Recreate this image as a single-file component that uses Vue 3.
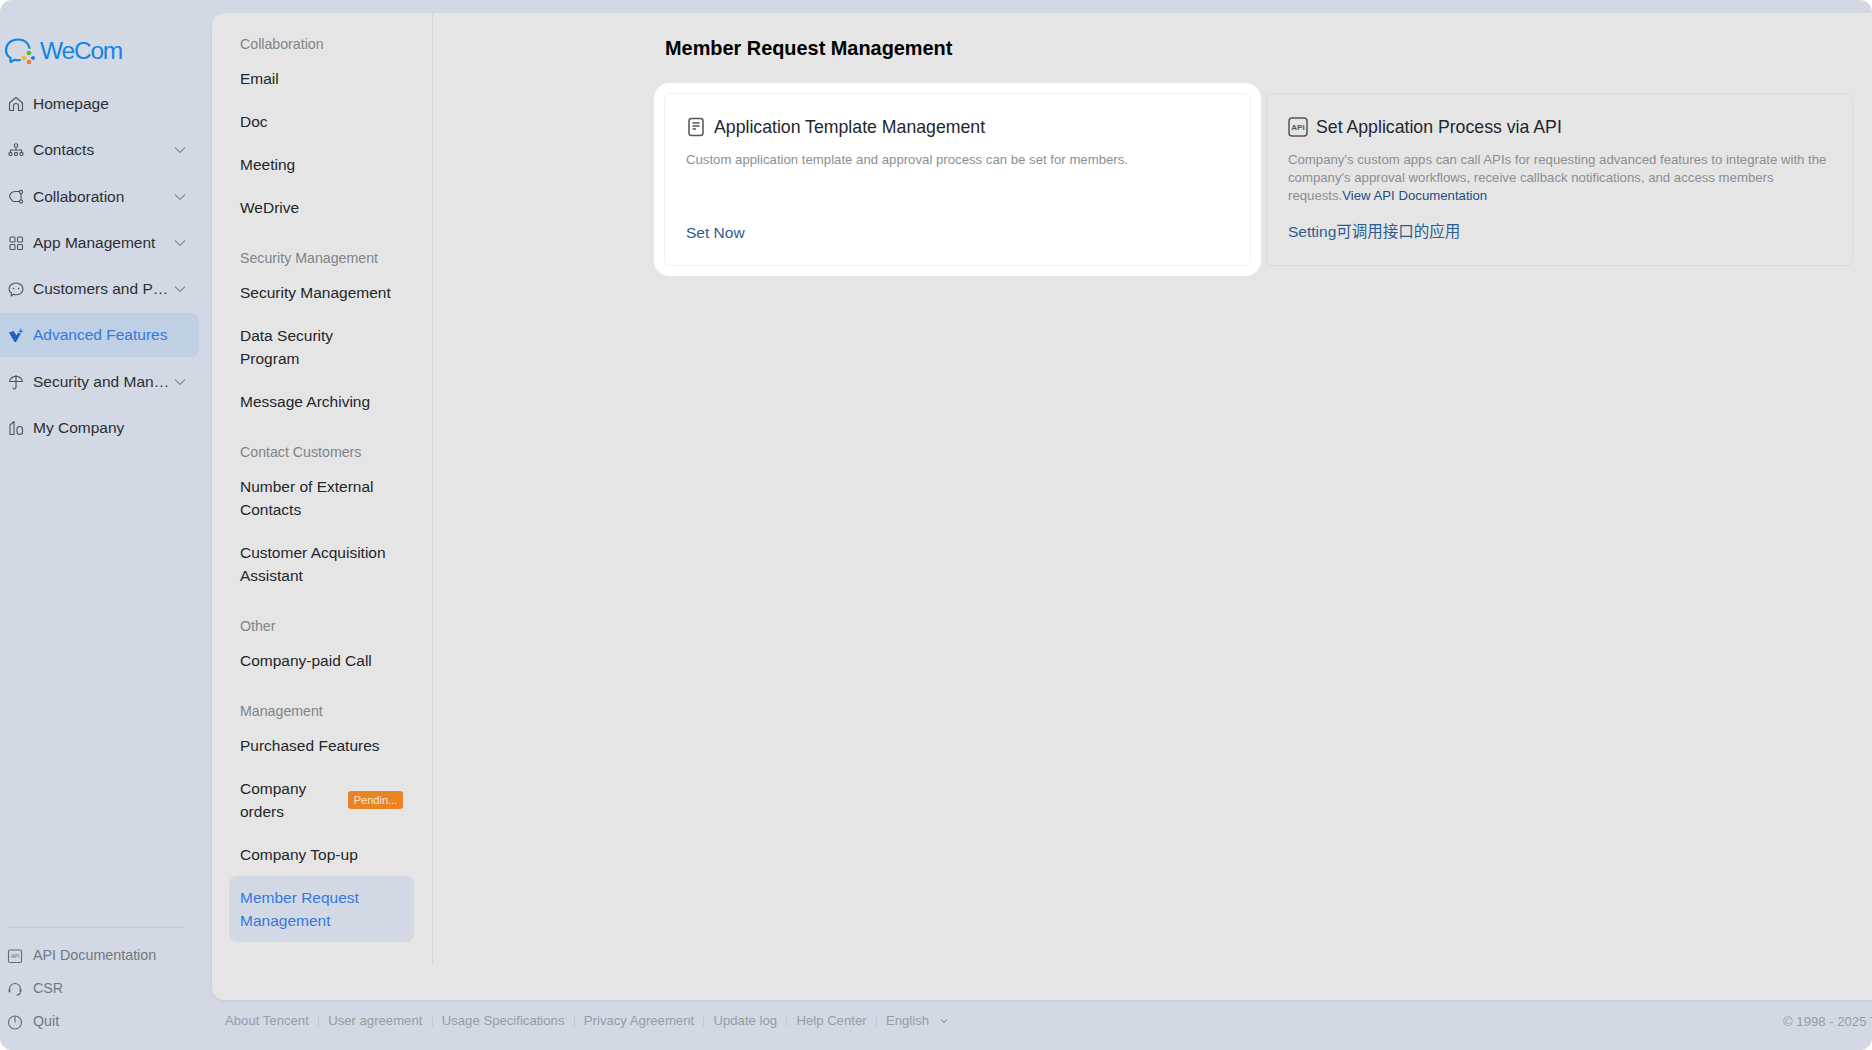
<template>
  <div class="page">
    <aside class="sidebar">
      <div class="logo">
        <svg width="32" height="28" viewBox="0 0 32 28" fill="none">
          <path d="M25.5 11C24 5.5 19.500 2.500 14 2.500 7 2.500 2 7 2 13c0 3.500 1.500 6 4.500 8v4l4.300-2.200c1.700.5 3.700.6 5.200.2" stroke="#1484e6" stroke-width="2.200" stroke-linejoin="round" stroke-linecap="round" />
          <circle cx="20" cy="21" r="2.300" fill="#f5b81f" />
          <circle cx="29" cy="21" r="2" fill="#1484e6" />
          <circle cx="25" cy="16" r="2.300" fill="#5db52f" />
          <circle cx="25" cy="25" r="2.300" fill="#ee7a2d" />
        </svg>
        <span>WeCom</span>
      </div>

      <nav class="main-nav">
        <a
          v-for="item in mainNav"
          :key="item.label"
          class="nav-item"
          :class="{ active: item.active }"
        >
          <svg class="nav-icon" viewBox="0 0 16 16" fill="none" v-html="item.icon"></svg>
          <span class="nav-label">{{ item.label }}</span>
          <svg v-if="item.arrow" class="chevron" viewBox="0 0 12 8" fill="none">
            <path d="M1 1.500l5 5 5-5" stroke="currentColor" stroke-width="1.200" />
          </svg>
        </a>
      </nav>

      <div class="side-bottom">
        <a v-for="item in bottomNav" :key="item.label" class="bottom-item">
          <svg class="nav-icon" viewBox="0 0 16 16" fill="none" v-html="item.icon"></svg>
          <span>{{ item.label }}</span>
        </a>
      </div>
    </aside>

    <div class="right">
      <main class="panel">
        <div class="sub-nav">
          <section v-for="group in groups" :key="group.title" class="group">
            <h4>{{ group.title }}</h4>
            <a
              v-for="link in group.links"
              :key="link.label"
              class="sub-item"
              :class="{ current: link.current }"
            >
              <span class="sub-label">{{ link.label }}</span>
              <span v-if="link.badge" class="badge">{{ link.badge }}</span>
            </a>
          </section>
        </div>

        <div class="content">
          <h1>Member Request Management</h1>
          <div class="cards">
            <div class="card highlighted">
              <div class="card-title">
                <svg width="20" height="20" viewBox="0 0 20 20" fill="none">
                  <rect x="3" y="1.500" width="14" height="17" rx="2.500" stroke="#555" stroke-width="1.500" />
                  <path d="M6.500 6h7M6.500 9h7M6.500 12h3.500" stroke="#555" stroke-width="1.300" />
                </svg>
                <span>Application Template Management</span>
              </div>
              <p class="desc">Custom application template and approval process can be set for members.</p>
              <a class="action">Set Now</a>
            </div>
            <div class="card">
              <div class="card-title">
                <svg width="20" height="20" viewBox="0 0 20 20" fill="none">
                  <rect x="1" y="1" width="18" height="18" rx="3" stroke="#555" stroke-width="1.500" />
                  <text x="10" y="13" text-anchor="middle" class="api-text">API</text>
                </svg>
                <span>Set Application Process via API</span>
              </div>
              <p class="desc">
                Company's custom apps can call APIs for requesting advanced features to integrate with the company's approval workflows, receive callback notifications, and access members requests.<a class="doc-link">View API Documentation</a>
              </p>
              <a class="action">Setting可调用接口的应用</a>
            </div>
          </div>
        </div>
      </main>

      <footer class="footer">
        <div class="foot-links">
          <a v-for="link in footerLinks" :key="link">{{ link }}</a>
          <a class="lang">
            English
            <svg width="8" height="6" viewBox="0 0 8 6" fill="none">
              <path d="M1 1.500l3 3 3-3" stroke="currentColor" stroke-width="1.100" />
            </svg>
          </a>
        </div>
        <span class="copy">© 1998 - 2025 Tencent Inc. All Rights Reserved</span>
      </footer>
    </div>
  </div>
</template>

<script setup>
const s = 'stroke="currentColor" stroke-width="1.100"';

const mainNav = [
  {
    label: "Homepage",
    icon: `<path d="M1.500 7L8 1.500 14.500 7v7.500h-4V10a2.500 2.500 0 0 0-5 0v4.500h-4z" ${s} stroke-linejoin="round"/>`,
  },
  {
    label: "Contacts",
    arrow: true,
    icon: `<circle cx="8" cy="3.500" r="1.800" ${s}/><path d="M8 5.500V8M2.500 10.500V8h11v2.500" ${s}/><circle cx="2.500" cy="12" r="1.600" ${s}/><circle cx="8" cy="12" r="1.600" ${s}/><circle cx="13.500" cy="12" r="1.600" ${s}/>`,
  },
  {
    label: "Collaboration",
    arrow: true,
    icon: `<path d="M11.500 2.500H7A6 6 0 0 0 1.500 8l3.500 4.500h6M13 5v5.500" ${s}/><circle cx="13" cy="3" r="1.600" ${s}/><circle cx="13" cy="12.500" r="1.600" ${s}/>`,
  },
  {
    label: "App Management",
    arrow: true,
    icon: `<rect x="2" y="2" width="5" height="5" rx="1" ${s}/><rect x="9.500" y="2" width="5" height="5" rx="1" ${s}/><rect x="2" y="9.500" width="5" height="5" rx="1" ${s}/><rect x="9.500" y="9.500" width="5" height="5" rx="1" ${s}/>`,
  },
  {
    label: "Customers and Partners",
    arrow: true,
    icon: `<path d="M3.500 12.300C2 11.200 1 9.700 1 7.900 1 4.600 4.100 2 8 2s7 2.600 7 5.900-3.100 5.900-7 5.900c-1 0-2-.2-2.800-.5L3.200 15z" ${s} stroke-linejoin="round"/><path d="M5.500 7.500h.01M10.500 7.500h.01" stroke="currentColor" stroke-width="1.600" stroke-linecap="round"/>`,
  },
  {
    label: "Advanced Features",
    active: true,
    icon: `<path d="M1 5.500L5.500 4l3 4.500L10 5.500 12.500 7 8 15H6.500z" fill="#1f5fc0"/><path d="M12.800 1l.8 2.400 2 .8-2 .8-.8 2.400-.8-2.400-2-.8 2-.8z" fill="#2f76dc"/>`,
  },
  {
    label: "Security and Management",
    arrow: true,
    icon: `<path d="M1.500 7.500C2 4.500 4.800 2.500 8 2.500s6 2 6.500 5z" ${s} stroke-linejoin="round"/><path d="M8 1v12.500a1.500 1.500 0 0 1-3 0" ${s}/>`,
  },
  {
    label: "My Company",
    icon: `<path d="M2 14.500V5L6 1.500v13z" ${s} stroke-linejoin="round"/><rect x="9" y="6.500" width="5.500" height="8" rx="2.700" ${s}/>`,
  },
];

const bottomNav = [
  {
    label: "API Documentation",
    icon: `<rect x="1.500" y="2" width="13" height="12.500" rx="1.500" ${s}/><text x="8" y="10" text-anchor="middle" font-size="5" font-family="Liberation Sans, sans-serif" fill="currentColor">API</text>`,
  },
  {
    label: "CSR",
    icon: `<path d="M2.500 10V8a5.500 5.500 0 0 1 11 0v2" ${s}/><rect x="1.500" y="8" width="2" height="3.500" rx="1" fill="currentColor"/><rect x="12.500" y="8" width="2" height="3.500" rx="1" fill="currentColor"/><path d="M13.500 11.500c-.5 2-2 2.500-4 2.500" ${s}/>`,
  },
  {
    label: "Quit",
    icon: `<circle cx="8" cy="8.500" r="6.500" ${s}/><path d="M8 2v6.500" ${s}/>`,
  },
];

const groups = [
  {
    title: "Collaboration",
    links: [{ label: "Email" }, { label: "Doc" }, { label: "Meeting" }, { label: "WeDrive" }],
  },
  {
    title: "Security Management",
    links: [
      { label: "Security Management" },
      { label: "Data Security Program" },
      { label: "Message Archiving" },
    ],
  },
  {
    title: "Contact Customers",
    links: [
      { label: "Number of External Contacts" },
      { label: "Customer Acquisition Assistant" },
    ],
  },
  { title: "Other", links: [{ label: "Company-paid Call" }] },
  {
    title: "Management",
    links: [
      { label: "Purchased Features" },
      { label: "Company orders", badge: "Pendin..." },
      { label: "Company Top-up" },
      { label: "Member Request Management", current: true },
    ],
  },
];

const footerLinks = [
  "About Tencent",
  "User agreement",
  "Usage Specifications",
  "Privacy Agreement",
  "Update log",
  "Help Center",
];
</script>

<style>
html,
body {
  margin: 0;
  background: #fff;
}
</style>

<style scoped>
.page {
  display: flex;
  height: 1050px;
  overflow: hidden;
  border-radius: 12px;
  background: #d2d9e4;
  color: #2b2f36;
  font-family: "Liberation Sans", "Noto Sans CJK SC", sans-serif;
  font-size: 15.5px;
}

a {
  cursor: pointer;
}

/* left column */
.sidebar {
  width: 212px;
  flex-shrink: 0;
  display: flex;
  flex-direction: column;
  box-sizing: border-box;
  padding-top: 36px;
}

.logo {
  display: flex;
  align-items: center;
  gap: 4px;
  height: 30px;
  padding-left: 4px;
  margin-bottom: 16px;
  color: #1484e6;
  font-size: 24.5px;
  letter-spacing: -1.2px;
}

.main-nav {
  display: flex;
  flex-direction: column;
  gap: 2.3px;
}

.nav-item {
  display: flex;
  align-items: center;
  width: 199px;
  height: 44px;
  box-sizing: border-box;
  padding: 0 13px 0 8px;
  border-radius: 0 8px 8px 0;
}

.nav-item.active {
  background: #bfcfe4;
  color: #3478e0;
}

.nav-icon {
  width: 16px;
  height: 16px;
  flex-shrink: 0;
  margin-right: 9px;
  color: #4f5359;
}

.nav-label {
  flex: 1;
  min-width: 0;
  overflow: hidden;
  white-space: nowrap;
  text-overflow: ellipsis;
}

.chevron {
  width: 12px;
  height: 8px;
  flex-shrink: 0;
  margin-left: 2px;
  color: #868c96;
}

.side-bottom {
  margin: auto 0 13px 7px;
  width: 178px;
  padding-top: 10px;
  border-top: 1px solid #c3cad5;
  color: #73787f;
  font-size: 14.3px;
}

.bottom-item {
  display: flex;
  align-items: center;
  height: 33px;
}

.bottom-item .nav-icon {
  margin-right: 10px;
  color: #666b72;
  position: relative;
  top: 1px;
}

/* right column */
.right {
  flex: 1;
  min-width: 0;
  display: flex;
  flex-direction: column;
  padding-top: 13px;
}

.panel {
  flex: 1;
  min-height: 0;
  display: flex;
  background: #e5e5e5;
  border-radius: 12px 0 0 12px;
  box-shadow: 0 1px 3px rgba(120, 130, 150, 0.2);
}

.sub-nav {
  width: 221px;
  height: 951px;
  flex-shrink: 0;
  box-sizing: border-box;
  padding: 20px 18px 0 17px;
  border-right: 1px solid #d6d6d6;
}

.group {
  margin-bottom: 18px;
}

.group h4 {
  margin: 0;
  padding: 0 11px 1px;
  height: 23px;
  line-height: 23px;
  font-size: 14.2px;
  font-weight: 400;
  color: #808489;
}

.sub-item {
  display: flex;
  align-items: center;
  gap: 8px;
  padding: 10px 22px 10px 11px;
  line-height: 23px;
  border-radius: 8px;
  color: #23262b;
}

.sub-label {
  flex: 1;
  min-width: 0;
}

.sub-item.current {
  background: #d2d9e4;
  color: #3478e0;
}

.badge {
  flex-shrink: 0;
  width: 55px;
  height: 18px;
  line-height: 18px;
  margin-right: -11px;
  border-radius: 3px;
  background: #e98324;
  color: #f6ead9;
  text-align: center;
  font-size: 11px;
}

.content {
  flex: 1;
  min-width: 0;
  padding: 0 19px 0 232px;
}

h1 {
  margin: 0;
  padding-top: 23px;
  height: 32px;
  line-height: 24px;
  font-size: 19.9px;
  font-weight: 700;
  color: #000;
}

.cards {
  display: flex;
  gap: 15px;
  margin-top: 25px;
  margin-left: -1px;
}

.card {
  flex: 1;
  min-width: 0;
  height: 173px;
  padding: 17px 22px 0 21px;
  border: 1px solid #dadada;
  border-radius: 6px;
  box-sizing: border-box;
}

.card.highlighted {
  background: #fff;
  border-color: #f2f2f2;
  box-shadow: 0 0 0 10px #fff;
}

.card-title {
  display: flex;
  align-items: center;
  gap: 8px;
  height: 32px;
  font-size: 17.7px;
  color: #23272d;
}

.api-text {
  font-size: 8px;
  font-weight: 700;
  fill: #555;
  font-family: "Liberation Sans", sans-serif;
}

.desc {
  height: 54px;
  margin: 8px 0 0;
  line-height: 18px;
  font-size: 13.2px;
  color: #8b8f94;
}

.doc-link {
  color: #24507f;
}

.action {
  display: block;
  margin-top: 16px;
  font-size: 15.5px;
  line-height: 24px;
  color: #2d5c8f;
}

.card:last-child .action {
  margin-top: 15px;
}

/* footer */
.footer {
  height: 50px;
  flex-shrink: 0;
  display: flex;
  align-items: center;
  justify-content: space-between;
  box-sizing: border-box;
  padding: 0 0 8px 13px;
  color: #969ca6;
  font-size: 13.15px;
}

.foot-links {
  display: flex;
  align-items: center;
}

.foot-links a {
  padding: 0 9.2px;
  line-height: 12px;
  border-right: 1px solid #c3cad5;
}

.foot-links a:first-child {
  padding-left: 0;
}

.foot-links .lang {
  display: flex;
  align-items: center;
  gap: 11px;
  border-right: none;
}

.copy {
  width: 89px;
  overflow: hidden;
  white-space: nowrap;
}
</style>
